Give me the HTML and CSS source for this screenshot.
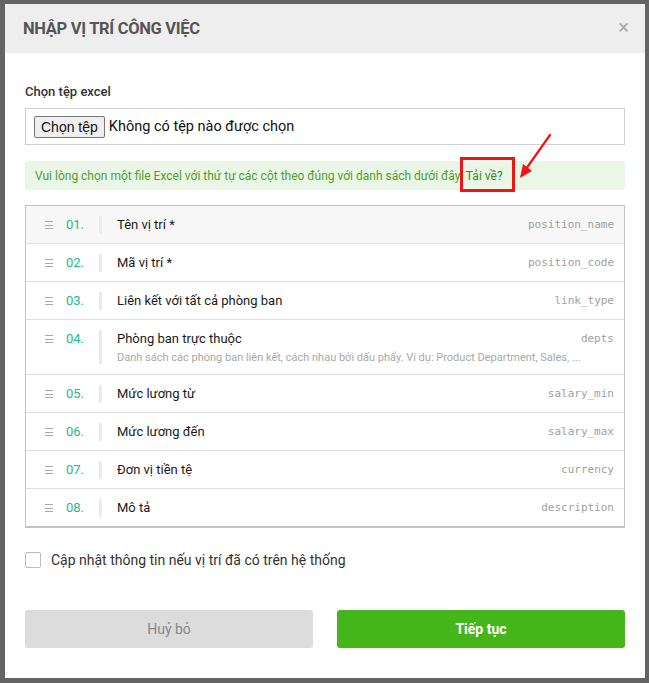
FILE: index.html
```html
<!DOCTYPE html>
<html lang="vi">
<head>
<meta charset="utf-8">
<title>Nhập vị trí công việc</title>
<link rel="stylesheet" href="styles.css">
</head>
<body>
<div class="modal">
  <div class="modal-header">
    <h2 class="modal-title">NHẬP VỊ TRÍ CÔNG VIỆC</h2>
    <span class="close">×</span>
  </div>
  <div class="modal-body">
    <div class="field-label">Chọn tệp excel</div>
    <div class="file-box">
      <span class="file-btn">Chọn tệp</span>
      <span class="file-text">Không có tệp nào được chọn</span>
    </div>
    <div class="alert">
      Vui lòng chọn một file Excel với thứ tự các cột theo đúng với danh sách dưới đây. <a class="alert-link">Tải về?</a>
      <span class="mark-box"></span>
      <svg class="mark-arrow" width="40" height="50" viewBox="0 0 40 50">
        <line x1="34" y1="4" x2="10" y2="38" stroke="#f01414" stroke-width="2.2" stroke-linecap="round"/>
        <polygon points="4,47 7,33 16,40" fill="#f01414"/>
      </svg>
    </div>
    <div class="cols">
      <div class="row first">
        <span class="grip"></span><span class="num">01.</span><span class="sep"></span>
        <div class="content"><div class="name">Tên vị trí *</div></div>
        <span class="code">position_name</span>
      </div>
      <div class="row">
        <span class="grip"></span><span class="num">02.</span><span class="sep"></span>
        <div class="content"><div class="name">Mã vị trí *</div></div>
        <span class="code">position_code</span>
      </div>
      <div class="row">
        <span class="grip"></span><span class="num">03.</span><span class="sep"></span>
        <div class="content"><div class="name">Liên kết với tất cả phòng ban</div></div>
        <span class="code">link_type</span>
      </div>
      <div class="row">
        <span class="grip"></span><span class="num">04.</span><span class="sep tallest"></span>
        <div class="content"><div class="name">Phòng ban trực thuộc</div>
          <div class="sub">Danh sách các phòng ban liên kết, cách nhau bởi dấu phẩy. Ví dụ: Product Department, Sales, ...</div></div>
        <span class="code">depts</span>
      </div>
      <div class="row">
        <span class="grip"></span><span class="num">05.</span><span class="sep"></span>
        <div class="content"><div class="name">Mức lương từ</div></div>
        <span class="code">salary_min</span>
      </div>
      <div class="row">
        <span class="grip"></span><span class="num">06.</span><span class="sep"></span>
        <div class="content"><div class="name">Mức lương đến</div></div>
        <span class="code">salary_max</span>
      </div>
      <div class="row">
        <span class="grip"></span><span class="num">07.</span><span class="sep"></span>
        <div class="content"><div class="name">Đơn vị tiền tệ</div></div>
        <span class="code">currency</span>
      </div>
      <div class="row">
        <span class="grip"></span><span class="num">08.</span><span class="sep"></span>
        <div class="content"><div class="name">Mô tả</div></div>
        <span class="code">description</span>
      </div>
    </div>
    <label class="check-row">
      <span class="checkbox"></span>
      <span class="check-text">Cập nhật thông tin nếu vị trí đã có trên hệ thống</span>
    </label>
    <div class="actions">
      <button class="btn btn-cancel">Huỷ bỏ</button>
      <button class="btn btn-primary">Tiếp tục</button>
    </div>
  </div>
</div>
</body>
</html>
```

FILE: styles.css
```css
* { box-sizing: border-box; }
html, body { margin: 0; height: 100%; }
body {
  background: #646464;
  padding: 4px 5px 0;
  font-family: Roboto, "Noto Sans", Arial, sans-serif;
  color: #333;
  overflow: hidden;
}
.modal {
  width: 640px;
  height: 674px;
  background: #fff;
  display: flex;
  flex-direction: column;
}
.modal-header {
  height: 49px;
  background: #eeeeee;
  display: flex;
  align-items: center;
  justify-content: space-between;
  padding: 0 16px 0 18px;
}
.modal-title {
  margin: 0;
  font-size: 16.5px;
  font-weight: 700;
  color: #555;
  letter-spacing: -0.3px;
}
.close {
  font-size: 20px;
  color: #a8a8a8;
  line-height: 1;
  margin-top: -3px;
}
.modal-body {
  padding: 30px 20px 30px;
  display: flex;
  flex-direction: column;
  flex: 1;
}
.field-label {
  font-size: 13px;
  font-weight: 500;
  color: #333;
  line-height: 18px;
  margin-bottom: 7px;
}
.file-box {
  height: 37px;
  border: 1px solid #cfcfcf;
  display: flex;
  align-items: center;
  padding: 0 8px;
  gap: 4px;
}
.file-btn {
  font-family: "Liberation Sans", Arial, sans-serif;
  font-size: 14px;
  color: #111;
  background: #efefef;
  border: 1px solid #767676;
  border-radius: 2px;
  padding: 1px 6px;
  height: 22px;
  line-height: 18px;
}
.file-text {
  font-size: 14.5px;
  color: #111;
}
.alert {
  position: relative;
  margin-top: 16px;
  height: 29px;
  background: #eaf6e6;
  border-radius: 3px;
  padding: 0 10px;
  display: flex;
  align-items: center;
  gap: 3px;
  font-size: 12px;
  color: #4fa02b;
  white-space: nowrap;
}
.alert-link {
  color: #3b8b16;
  font-weight: 400;
}
.mark-box {
  position: absolute;
  left: 435px;
  top: -4px;
  width: 55px;
  height: 35px;
  border: 3px solid #f01414;
}
.mark-arrow {
  position: absolute;
  left: 491px;
  top: -30px;
}
.cols {
  margin-top: 15px;
  border: 1px solid #c4c4c4;
  border-bottom-width: 2px;
}
.row {
  display: flex;
  align-items: flex-start;
  padding: 10px 10px 9px 19px;
  border-top: 1px solid #dedede;
  min-height: 38px;
}
.row.first {
  border-top: 0;
  background: #f7f7f7;
  min-height: 37px;
}
.grip {
  width: 8px;
  height: 8px;
  margin-top: 5px;
  margin-right: 13px;
  background: linear-gradient(#a9a9a9, #a9a9a9) 0 0 / 100% 1px no-repeat,
              linear-gradient(#a9a9a9, #a9a9a9) 0 3.5px / 100% 1px no-repeat,
              linear-gradient(#a9a9a9, #a9a9a9) 0 7px / 100% 1px no-repeat;
}
.num {
  width: 33px;
  font-size: 13px;
  line-height: 18px;
  color: #22bb88;
  font-weight: 400;
}
.sep {
  width: 3px;
  height: 18px;
  background: #ebebeb;
  margin-right: 15px;
}
.sep.tallest { height: 34px; }
.content { flex: 1; min-width: 0; }
.name {
  font-size: 13px;
  line-height: 18px;
  color: #1a1a1a;
}
.sub {
  font-size: 11px;
  line-height: 15px;
  color: #a8a8a8;
  margin-top: 2px;
  white-space: nowrap;
}
.code {
  font-family: "DejaVu Sans Mono", "Liberation Mono", monospace;
  font-size: 11px;
  line-height: 18px;
  color: #a0a0a0;
}
.check-row {
  margin-top: 24px;
  display: flex;
  align-items: center;
  gap: 10px;
}
.checkbox {
  width: 16px;
  height: 16px;
  border: 1px solid #bdbdbd;
  border-radius: 2px;
  background: #fff;
}
.check-text {
  font-size: 14px;
  color: #333;
}
.actions {
  margin-top: auto;
  display: grid;
  grid-template-columns: 1fr 1fr;
  gap: 24px;
}
.btn {
  height: 38px;
  border: 0;
  border-radius: 3px;
  font-family: Roboto, "Noto Sans", Arial, sans-serif;
  font-size: 14px;
}
.btn-cancel {
  background: #dcdcdc;
  color: #888;
}
.btn-primary {
  background: #44b619;
  color: #fff;
  font-weight: 700;
}
```
